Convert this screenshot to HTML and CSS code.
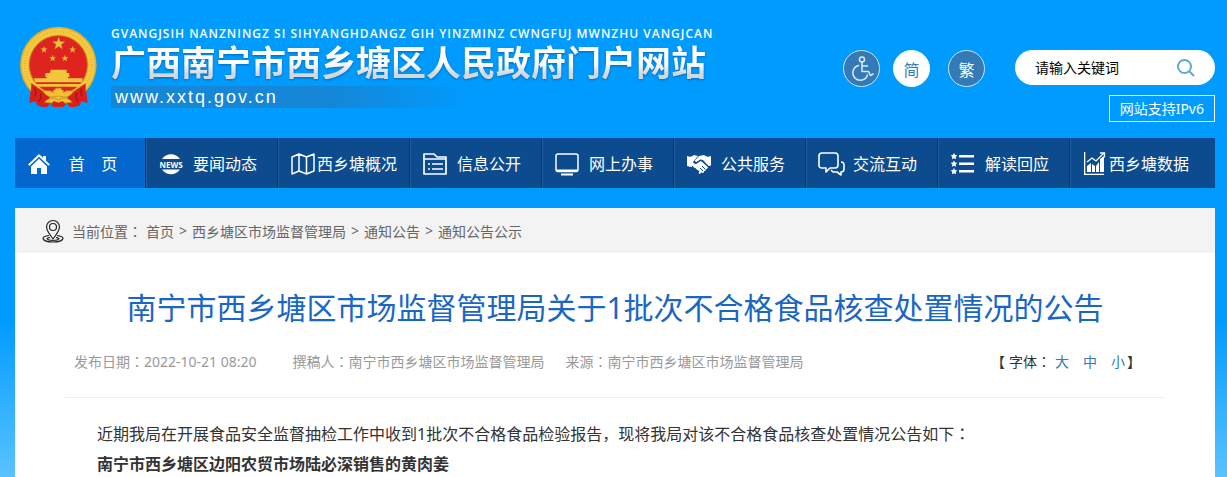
FILE: index.html
```html
<!DOCTYPE html>
<html lang="zh-CN">
<head>
<meta charset="utf-8">
<meta name="viewport" content="width=device-width, initial-scale=1">
<title>南宁市西乡塘区市场监督管理局关于1批次不合格食品核查处置情况的公告</title>
<link rel="stylesheet" href="styles.css">
</head>
<body>
<div class="page">
  <header class="header">
    <a class="brand" href="#">
      <svg class="emblem" viewBox="30 30 231 249" aria-hidden="true">
        <defs>
          <radialGradient id="gold"><stop offset=".72" stop-color="#c98f16"/><stop offset=".8" stop-color="#f3c83c"/><stop offset=".92" stop-color="#f6cf48"/><stop offset="1" stop-color="#d9a021"/></radialGradient>
          <path id="star" d="M0-10 2.4-3.2 9.5-3.1 3.8 1.2 5.9 8.1 0 4-5.9 8.1-3.8 1.2-9.5-3.1-2.4-3.2z"/>
        </defs>
        <path fill="#d81f1c" d="M67 208q-10 10-6 26l-3 30 20-6 16 17 18 1 14-16h40l14 16 18-1 16-17 19 6-4-34q4-14-6-24z"/>
        <circle cx="145" cy="150" r="115" fill="url(#gold)"/>
        <circle cx="145" cy="150" r="101" fill="none" stroke="#e3b235" stroke-width="7" stroke-dasharray="3 5"/>
        <circle cx="145" cy="149" r="87" fill="#df2420" stroke="#b97b12" stroke-width="2"/>
        <g fill="#efc13a" stroke="#a95e13" stroke-width=".4">
          <use href="#star" transform="translate(146 86) scale(2.1)"/>
          <use href="#star" transform="translate(102 104) scale(1.1)"/><use href="#star" transform="translate(188 104) scale(1.1)"/>
          <use href="#star" transform="translate(128 130) scale(1.1)"/><use href="#star" transform="translate(165 130) scale(1.1)"/>
        </g>
        <path fill="#f4c63c" d="M122 164h48v10h8v12h-4v4h44l-2 12H75l-3-12h38v-4h-4v-12h14z"/>
        <path fill="#f4c63c" d="M76 207h138l-8 8H84z"/>
        <path fill="#d81f1c" d="M64 205 114 239q10 10 0 22l-4 15-28-4-8-19-15 11 4-28zM227 205l-50 34q-10 10 0 22l4 15 28-4 8-19 14 11-4-28z"/>
        <path fill="none" stroke="#8e1111" stroke-width="3" d="M75 220q6 12-1 24M92 234q4 14-5 26M215 220q-6 12 1 24M199 234q-4 14 5 26"/>
        <path fill="#f2bf35" stroke="#bd7d15" stroke-width="2" d="m98 228 22-1 10 5q-4-8 5-7 0-9 10-5 10-4 10 5 9-1 5 7l10-5 22 1q-13 20-31 18l-16-3-16 3q-18 2-31-18zM103 262q15-17 31-12l11 4 11-4q17-5 31 12l-19 2q-23-6-46 0z"/>
        <path fill="#d81f1c" d="m122 270 10-12 13 6 13-6 10 12-10 6h-26z"/>
      </svg>
      <span class="brand-text">
        <span class="brand-zhuang">GVANGJSIH NANZNINGZ SI SIHYANGHDANGZ GIH YINZMINZ CWNGFUJ MWNZHU VANGJCAN</span>
        <span class="brand-name">广西南宁市西乡塘区人民政府门户网站</span>
        <span class="brand-url">www.xxtq.gov.cn</span>
      </span>
    </a>
    <div class="tools">
      <div class="tools-row">
        <a class="round" href="#" aria-label="无障碍">
          <svg class="round-icon" viewBox="0 0 24 26" fill="none" stroke="#d8ebff" stroke-width="1.5" stroke-linecap="round" stroke-linejoin="round">
            <circle cx="12" cy="3.5" r="2.5"/><path d="M12 6.500v9h6.500l2 4 2.500-1.500M12 10h5.500M8.500 9.500A7.500 7.500 0 1 0 17.500 19"/>
          </svg>
        </a>
        <a class="round round-light" href="#">简</a>
        <a class="round round-last" href="#">繁</a>
        <form class="search" role="search">
          <input class="search-input" type="text" placeholder="请输入关键词" aria-label="请输入关键词">
          <button class="search-button" type="button" aria-label="搜索">
            <svg class="search-icon" viewBox="0 0 18 18" fill="none" stroke="#64a7cf" stroke-width="2"><circle cx="7.500" cy="7.500" r="6.500"/><path d="m12.500 12.500 4.500 4.500"/></svg>
          </button>
        </form>
      </div>
      <a class="ipv6" href="#">网站支持IPv6</a>
    </div>
  </header>

  <nav class="nav">
    <a class="nav-item nav-active" href="#">
      <svg class="nav-icon" viewBox="0 0 24 24" fill="#fff"><path d="M12 2 1 12.500l1.500 1.300L12 4.800l9.500 9L23 12.500l-4-3.800V4h-3v1.800z"/><path d="M12 6.800 4 14.400V22h6v-6h4v6h6v-7.600z"/></svg>
      <span class="nav-label">首 &nbsp; &nbsp;页</span></a>
    <a class="nav-item" href="#">
      <svg class="nav-icon" viewBox="0 0 24 24" fill="#fff"><path d="M3 7a11 11 0 0 1 18 0zM3 17.500h18a11 11 0 0 1-18 0z"/><text class="news" x="12" y="15.500" text-anchor="middle">NEWS</text></svg>
      <span class="nav-label">要闻动态</span></a>
    <a class="nav-item" href="#">
      <svg class="nav-icon" viewBox="0 0 24 24" fill="none" stroke="#fff" stroke-width="1.5" stroke-linejoin="round"><path d="m1 5 7-3 7.500 3L23 2v17l-7.500 3L8 19l-7 3zM8 2v17M15.500 5v17"/></svg>
      <span class="nav-label">西乡塘概况</span></a>
    <a class="nav-item" href="#">
      <svg class="nav-icon" viewBox="0 0 24 24" fill="none" stroke="#fff" stroke-width="1.7" stroke-linejoin="round"><path d="M1 22V2h10l3 3h9v17zM1 7h22"/><path d="M5 12h2m2 0h11M5 17h2m2 0h11"/></svg>
      <span class="nav-label">信息公开</span></a>
    <a class="nav-item" href="#">
      <svg class="nav-icon" viewBox="0 0 24 24" fill="none" stroke="#fff" stroke-width="1.500"><rect x="1" y="2" width="22" height="17.500" rx="2"/><path d="M1 18.500h22" stroke-width="2"/><path d="M6 22.500h12" stroke-width="2"/></svg>
      <span class="nav-label">网上办事</span></a>
    <a class="nav-item" href="#">
      <svg class="nav-icon" viewBox="0 0 24 24" fill="#fff"><path d="M0 4q4 2 7-1l4 1-5 6q2 4 6 0l2-1 7 6-1 2-1.500 0v2H17l-.5 2-2-.5-2 1.500-1-1 1-2-2-1-2-1.500-2-1.500L4 15l-4-1z"/><path d="m24 4q-4 2-7-1l-5 1-4.500 5q1.500 2 4 0l2-1.500L16 8l5.500 6 2.500-.5z"/><path fill="none" stroke="#0c4b8e" d="m3 17 3-3M5.500 19l3-3M8 21l2.500-3M7 9.800q2.500 1.800 5-.8l2-1 7.500 7M15 14l3 3M13 16l3 3"/></svg>
      <span class="nav-label">公共服务</span></a>
    <a class="nav-item" href="#">
      <svg class="nav-icon nav-icon-wide" viewBox="0 0 27 24" fill="none" stroke="#fff" stroke-width="1.600" stroke-linejoin="round"><path d="M3 1h13q3 0 3 3v9q0 3-3 3h-5l-4 4v-4H3q-3 0-3-3V4q0-3 3-3z"/><path d="M22 10q3 0 3 3v4q0 3-3 3v3L18 20h-4l-2-2"/></svg>
      <span class="nav-label">交流互动</span></a>
    <a class="nav-item" href="#">
      <svg class="nav-icon" viewBox="0 0 24 24" fill="#fff"><path d="M8 3h15v2.500H8zM8 10.500h15V13H8zM8 18h15v2.500H8z"/><path id="bullet" d="m3 1 1.100 2 2.200.3-1.600 1.600.4 2.300L3 6.200.9 7.200l.4-2.300L-.3 3.300 1.900 3z"/><use href="#bullet" y="7.500"/><use href="#bullet" y="15"/></svg>
      <span class="nav-label">解读回应</span></a>
    <a class="nav-item" href="#">
      <svg class="nav-icon" viewBox="0 0 24 24" fill="#fff"><path d="M1 0h1.300v21.700H21V23H1zM4 14l4-3v9H4zM9 12l3 2v6H9zM13 14l3-4v10h-3zM17 7l4-3v16h-4z"/><path fill="none" stroke="#fff" stroke-width="1.300" d="m4 10 5-4 4 3 8-8M17 1h4.500v4.500"/></svg>
      <span class="nav-label">西乡塘数据</span></a>
  </nav>

  <main class="content">
    <div class="crumbs">
      <svg class="pin" viewBox="0 0 22 24" fill="none" stroke="#222" stroke-width="1.200"><path d="M11 20Q4.500 11.500 4.500 8a6.500 6.500 0 0 1 13 0q0 3.500-6.500 12z"/><circle cx="11" cy="8" r="3.500"/><path d="M7 16.500Q1 17.200 1 19.500 2 23 11 23t10-3.500q0-2.300-6-3"/><path d="M8 18.500q-3 .5-3 1.300Q6 21.500 11 21.500t6-1.700q0-.8-3-1.300"/></svg>
      <span>当前位置<span class="punct" lang="zh-TW">：</span></span>
      <a class="crumb" href="#">首页</a><span class="sep">&gt;</span><a class="crumb" href="#">西乡塘区市场监督管理局</a><span class="sep">&gt;</span><a class="crumb" href="#">通知公告</a><span class="sep">&gt;</span><a class="crumb" href="#">通知公告公示</a>
    </div>
    <article class="article">
      <h1 class="title">南宁市西乡塘区市场监督管理局关于1批次不合格食品核查处置情况的公告</h1>
      <div class="meta">
        <span class="meta-date">发布日期<span class="punct" lang="zh-TW">：</span>2022-10-21 08:20</span>
        <span class="meta-author">撰稿人<span class="punct" lang="zh-TW">：</span>南宁市西乡塘区市场监督管理局</span>
        <span>来源<span class="punct" lang="zh-TW">：</span>南宁市西乡塘区市场监督管理局</span>
        <span class="sizes"><span>【</span><span class="sizes-label">字体<span class="punct" lang="zh-TW">：</span></span><span class="sizes-options"><a class="size" href="#">大</a><a class="size" href="#">中</a><a class="size" href="#">小</a></span><span>】</span></span>
      </div>
      <div class="body">
        <p class="para">近期我局在开展食品安全监督抽检工作中收到1批次不合格食品检验报告，现将我局对该不合格食品核查处置情况公告如下<span class="punct" lang="zh-TW">：</span></p>
        <p class="para"><strong>南宁市西乡塘区边阳农贸市场陆必深销售的黄肉姜</strong></p>
      </div>
    </article>
  </main>
</div>
</body>
</html>
```
FILE: styles.css
```css
* {
  box-sizing: border-box;
}

body {
  margin: 0;
  min-height: 100vh;
  background: #009bff linear-gradient(#009bff 320px, #5cc3ff 480px) no-repeat;
  font-family: "Noto Sans", "Noto Sans CJK SC", sans-serif;
  font-size: 14px;
  color: #333;
}

a {
  color: inherit;
  text-decoration: none;
}

.page {
  max-width: 1227px;
  margin: 0 auto;
  padding: 0 12px 0 15px;
}

.punct {
  font-family: "Noto Sans CJK TC", sans-serif;
}

/* Header */
.header {
  display: flex;
  justify-content: space-between;
  height: 138px;
}

.brand {
  display: flex;
  gap: 14px;
  padding: 25px 0 0 5px;
  color: #fff;
}

.emblem {
  width: 77px;
  height: 83px;
}

.brand-text {
  display: flex;
  flex-direction: column;
  white-space: nowrap;
}

.brand-zhuang {
  font-family: "Open Sans", sans-serif;
  font-size: 12px;
  font-weight: 600;
  line-height: 18px;
  letter-spacing: 1px;
}

.brand-name {
  background: linear-gradient(#fff 55%, #d4d8dd 85%);
  background-clip: text;
  -webkit-background-clip: text;
  color: transparent;
  font-family: "Noto Sans CJK SC", sans-serif;
  font-size: 35px;
  font-weight: 700;
  line-height: 36px;
  filter: drop-shadow(0 1px 1px rgba(0, 60, 120, 0.5));
}

.brand-url {
  margin-top: 7px;
  padding-left: 4px;
  width: 360px;
  background: linear-gradient(90deg, #1686d6 60%, rgba(22, 134, 214, 0));
  font-family: "Liberation Sans", sans-serif;
  font-size: 18px;
  line-height: 22px;
  letter-spacing: 2px;
}

.tools {
  display: flex;
  flex-direction: column;
  align-items: flex-end;
  gap: 8px;
  padding-top: 50px;
}

.tools-row {
  display: flex;
  align-items: flex-start;
}

.round {
  display: flex;
  align-items: center;
  justify-content: center;
  width: 37px;
  height: 37px;
  margin-right: 13px;
  border: 1px solid #cfe6fb;
  border-radius: 50%;
  background: #337ab7;
  color: #fff;
  font-size: 16px;
}

.round-light {
  margin-right: 18px;
  border-color: #fff;
  background: #fff;
  color: #337ab7;
}

.round-last {
  margin-right: 30px;
}

.round-icon {
  width: 24px;
  height: 26px;
}

.search {
  display: flex;
  align-items: center;
  width: 200px;
  height: 35px;
  padding: 0 20px;
  border-radius: 18px;
  background: #fff;
}

.search-input {
  flex: 1;
  min-width: 0;
  padding: 0;
  border: 0;
  outline: 0;
  background: none;
  font: inherit;
}

.search-input::placeholder {
  color: #000;
}

.search-button {
  display: flex;
  padding: 0;
  border: 0;
  background: none;
}

.search-icon {
  width: 18px;
  height: 18px;
}

.ipv6 {
  padding: 0 10px;
  border: 1px solid #fff;
  color: #fff;
  line-height: 25px;
}

/* Main navigation */
.nav {
  display: flex;
  background: #0c4b8e;
}

.nav-item {
  display: flex;
  flex: 0 0 11%;
  align-items: center;
  height: 50px;
  padding-left: 12px;
  box-shadow: inset -1px 0 #205c9a, inset -2px 0 #073768;
  color: #fff;
  font-size: 16px;
}

.nav-item:last-child {
  box-shadow: none;
}

.nav-active {
  background: #0367cd;
}

.nav-icon {
  flex: none;
  width: 24px;
  height: 24px;
  margin: 2px -12px 0 0;
  overflow: visible;
}

.nav-icon-wide {
  width: 27px;
  margin-right: -15px;
}

.nav-label {
  flex: 1;
  text-align: center;
  white-space: nowrap;
}

.news {
  font: 700 8px "Open Sans", sans-serif;
}

/* Content */
.content {
  margin-top: 20px;
  min-height: 269px;
  background: #fff;
}

.crumbs {
  display: flex;
  align-items: center;
  height: 45px;
  padding-left: 27px;
  background: #f3f3f3;
  color: #666;
}

.pin {
  width: 22px;
  height: 24px;
  margin-right: 8px;
}

.crumb:first-of-type {
  margin-left: 4px;
}

.sep {
  padding: 0 5px;
}

.article {
  padding: 30px 50px 0;
}

.title {
  margin: 0;
  color: #1a66c4;
  font-size: 30px;
  font-weight: 400;
  line-height: 50px;
  text-align: center;
}

.meta {
  display: flex;
  align-items: center;
  height: 65px;
  padding: 0 24px 8px 9px;
  border-bottom: 1px solid #eee;
  color: #999;
}

.meta-date {
  margin-right: 36px;
}

.meta-author {
  margin-right: 21px;
}

.sizes {
  display: flex;
  margin-left: auto;
  color: #333;
}

.sizes-label {
  margin: 0 4px;
}

.sizes-options {
  display: flex;
  gap: 14px;
  margin-right: 2px;
  color: #337ab7;
}

.body {
  padding-top: 20px;
}

.para {
  margin: 0;
  font-size: 16px;
  line-height: 30px;
  text-indent: 2em;
}
```
